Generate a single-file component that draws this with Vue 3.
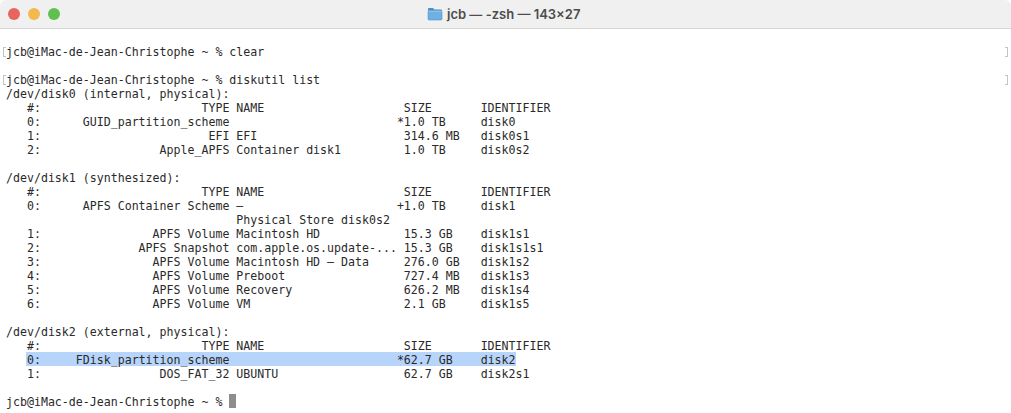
<script setup>
const row = (n, type, name, mark, size, id) =>
  `   ${n}:` + type.padStart(27) + ' ' + name.padEnd(23) + mark + size.padEnd(11) + id

const head = row('#', 'TYPE', 'NAME', ' ', 'SIZE', 'IDENTIFIER')
const lines = [
  { text: '' },
  { text: 'jcb@iMac-de-Jean-Christophe ~ % clear', mark: true },
  { text: '' },
  { text: 'jcb@iMac-de-Jean-Christophe ~ % diskutil list', mark: true },
  { text: '/dev/disk0 (internal, physical):' },
  { text: head },
  { text: row('0', 'GUID_partition_scheme', '', '*', '1.0 TB', 'disk0') },
  { text: row('1', 'EFI', 'EFI', ' ', '314.6 MB', 'disk0s1') },
  { text: row('2', 'Apple_APFS', 'Container disk1', ' ', '1.0 TB', 'disk0s2') },
  { text: '' },
  { text: '/dev/disk1 (synthesized):' },
  { text: head },
  { text: row('0', 'APFS Container Scheme', '–', '+', '1.0 TB', 'disk1') },
  { text: ' '.repeat(33) + 'Physical Store disk0s2' },
  { text: row('1', 'APFS Volume', 'Macintosh HD', ' ', '15.3 GB', 'disk1s1') },
  { text: row('2', 'APFS Snapshot', 'com.apple.os.update-...', ' ', '15.3 GB', 'disk1s1s1') },
  { text: row('3', 'APFS Volume', 'Macintosh HD – Data', ' ', '276.0 GB', 'disk1s2') },
  { text: row('4', 'APFS Volume', 'Preboot', ' ', '727.4 MB', 'disk1s3') },
  { text: row('5', 'APFS Volume', 'Recovery', ' ', '626.2 MB', 'disk1s4') },
  { text: row('6', 'APFS Volume', 'VM', ' ', '2.1 GB', 'disk1s5') },
  { text: '' },
  { text: '/dev/disk2 (external, physical):' },
  { text: head },
  { text: '   ', selected: row('0', 'FDisk_partition_scheme', '', '*', '62.7 GB', 'disk2').slice(3) },
  { text: row('1', 'DOS_FAT_32', 'UBUNTU', ' ', '62.7 GB', 'disk2s1') },
  { text: '' },
  { text: 'jcb@iMac-de-Jean-Christophe ~ % ', cursor: true },
]
</script>

<template>
  <div class="window">
    <header class="titlebar">
      <div class="lights">
        <span class="light red"></span>
        <span class="light yellow"></span>
        <span class="light green"></span>
      </div>
      <div class="title">
        <svg class="folder" width="16" height="14" viewBox="0 0 16 14">
          <path d="M1 3V2a1 1 0 0 1 1-1h4l1.5 1.5H14a1 1 0 0 1 1 1V4H1z" fill="#4f8fc4" />
          <rect x="1" y="3.5" width="14" height="9.5" rx="1" fill="#6fb0e2" stroke="#5b94c4" stroke-width="0.6" />
          <rect x="1.3" y="3.8" width="13.4" height="1" fill="#95c6ec" />
        </svg>
        <span>jcb — -zsh — 143×27</span>
      </div>
    </header>
    <main class="terminal">
      <div v-for="(line, i) in lines" :key="i" class="line">
        <span v-if="line.mark" class="mark left"></span>
        <span>{{ line.text }}</span>
        <span v-if="line.selected" class="selected">{{ line.selected }}</span>
        <span v-if="line.cursor" class="cursor"></span>
        <span v-if="line.mark" class="mark right"></span>
      </div>
    </main>
  </div>
</template>

<style>
html, body { margin: 0; background: #fff; }
</style>

<style scoped>
.window {
  width: 1011px;
  height: 413px;
  overflow: hidden;
  background: #fff;
}
.titlebar {
  height: 29px;
  box-sizing: border-box;
  background: #f0f0f0;
  border-bottom: 1px solid #d6d6d6;
  border-radius: 6px 6px 0 0;
  display: flex;
  align-items: center;
  position: relative;
}
.lights {
  display: flex;
  gap: 8px;
  padding-left: 8px;
}
.light {
  width: 12px;
  height: 12px;
  border-radius: 50%;
}
.red { background: #e9645c; }
.yellow { background: #f2b94f; }
.green { background: #5fc04f; }
.title {
  position: absolute;
  left: 427px;
  top: 5px;
  display: flex;
  align-items: center;
  gap: 4px;
  font: 600 13px/18px Inter, "Liberation Sans", sans-serif;
  color: #4c4c4c;
}
.terminal {
  padding-top: 2px;
  font-family: "DejaVu Sans Mono", monospace;
  font-size: 11.6px;
  line-height: 14px;
  color: #2a2a2a;
}
.line {
  position: relative;
  height: 14px;
  padding-left: 6px;
  white-space: pre;
  display: flex;
}
.selected {
  background: #b7d5fa;
  margin-left: -1px;
  padding-left: 1px;
  box-shadow: 0 -1px 0 #b7d5fa;
  background: linear-gradient(#b7d5fa calc(100% - 1px), transparent 0);
}
.cursor {
  width: 7px;
  height: 14px;
  margin-top: -1px;
  background: #8d8d8d;
}
.mark {
  position: absolute;
  top: 2px;
  width: 2px;
  height: 8px;
  border: 1px solid #c4c4c4;
}
.mark.left { left: 3px; border-right: 0; }
.mark.right { right: 3px; border-left: 0; }
</style>
